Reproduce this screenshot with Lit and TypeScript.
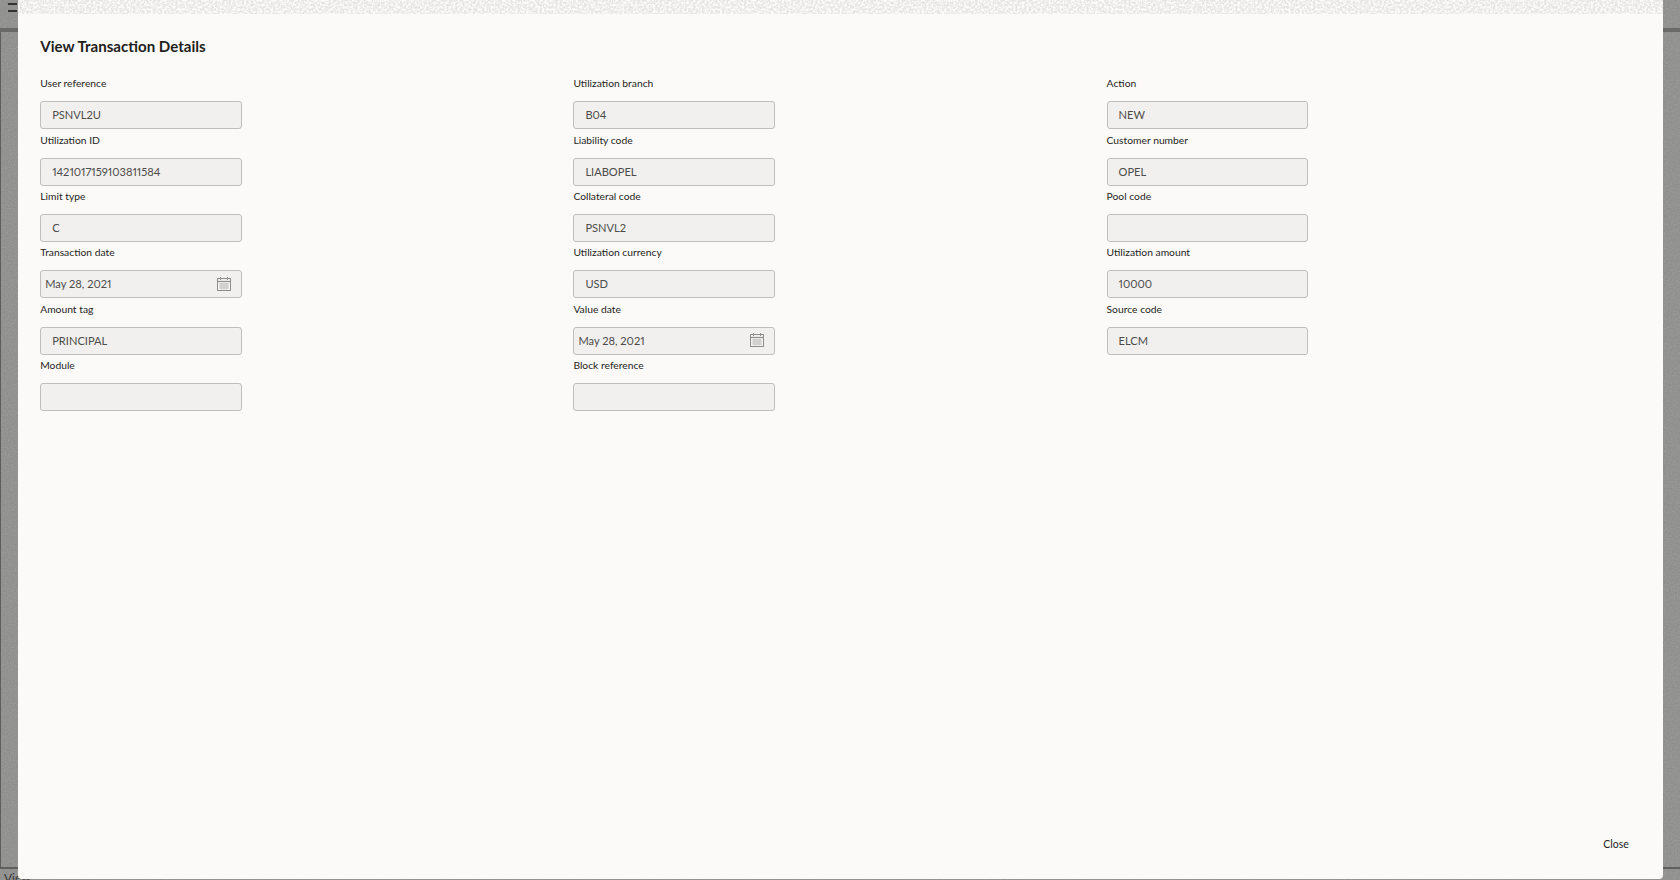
import { LitElement, html, css, svg, nothing } from "lit";
import { customElement } from "lit/decorators.js";

type Field = { label: string; value?: string; date?: boolean };

const COLUMNS: Field[][] = [
  [
    { label: "User reference", value: "PSNVL2U" },
    { label: "Utilization ID", value: "1421017159103811584" },
    { label: "Limit type", value: "C" },
    { label: "Transaction date", value: "May 28, 2021", date: true },
    { label: "Amount tag", value: "PRINCIPAL" },
    { label: "Module" },
  ],
  [
    { label: "Utilization branch", value: "B04" },
    { label: "Liability code", value: "LIABOPEL" },
    { label: "Collateral code", value: "PSNVL2" },
    { label: "Utilization currency", value: "USD" },
    { label: "Value date", value: "May 28, 2021", date: true },
    { label: "Block reference" },
  ],
  [
    { label: "Action", value: "NEW" },
    { label: "Customer number", value: "OPEL" },
    { label: "Pool code" },
    { label: "Utilization amount", value: "10000" },
    { label: "Source code", value: "ELCM" },
  ],
];

const calendar = svg`<svg class="cal" viewBox="0 0 14 14" width="14" height="14" fill="none" stroke="#8e8e8c" stroke-width="1">
  <rect x="0.5" y="1.5" width="13" height="12"/>
  <path d="M3.5 0v3M10.5 0v3"/>
  <path d="M0.5 4.5h13" stroke-width="1.2"/>
  <path d="M2.5 7h9M2.5 9h9M2.5 11h9" stroke="#b5b5b3"/>
  <path d="M4.5 6v6.5M7 6v6.5M9.5 6v6.5" stroke="#c9c9c7" stroke-width=".6"/>
</svg>`;

@customElement("app-root")
export class AppRoot extends LitElement {
  static styles = css`
    :host {
      display: block;
      width: 1680px;
      height: 880px;
      overflow: hidden;
      font-family: Lato, "Noto Sans", sans-serif;
      color: #2b2a28;
    }
    .page {
      position: relative;
      width: 1680px;
      height: 880px;
      background: #8e8e8d;
      overflow: hidden;
    }
    .noise {
      position: absolute;
      inset: 0;
      width: 100%;
      height: 100%;
    }
    .backdrop-top {
      position: absolute;
      left: 0;
      right: 0;
      top: 28px;
      height: 4px;
      background: #6a6a69;
    }
    .backdrop-edge {
      position: absolute;
      left: 0;
      top: 32px;
      bottom: 12px;
      width: 1px;
      background: #5d5d5c;
    }
    .backdrop-rule {
      position: absolute;
      left: 0;
      right: 0;
      bottom: 11px;
      height: 2px;
      background: #5f5f5e;
    }
    .backdrop-text {
      position: absolute;
      left: 4px;
      bottom: -6px;
      font-size: 12px;
      line-height: 16px;
      color: #333;
    }
    .burger {
      position: absolute;
      left: 8px;
      top: 3px;
      width: 9px;
      height: 5px;
      border-top: 2px solid #333;
      border-bottom: 2px solid #333;
    }
    .strip {
      position: absolute;
      left: 17.6px;
      right: 17.2px;
      top: 0;
      height: 13.5px;
      background: #e6e5e3;
    }
    .strip-noise {
      position: absolute;
      inset: 0;
      width: 100%;
      height: 100%;
    }
    .dialog {
      position: absolute;
      left: 17.6px;
      right: 17.2px;
      top: 13.5px;
      bottom: 1px;
      box-sizing: border-box;
      background: #fbfaf8;
      border-radius: 0 0 4px 4px;
      padding: 22.6px 23px 0 22.6px;
      display: flex;
      flex-direction: column;
    }
    h1 {
      margin: 0;
      font-size: 15.1px;
      line-height: 20px;
      font-weight: 700;
      color: #1f1e1c;
    }
    .grid {
      margin-top: 20.1px;
      display: grid;
      grid-template-columns: repeat(3, 533.2px);
    }
    .col {
      display: flex;
      flex-direction: column;
    }
    .field {
      height: 56.4px;
      display: flex;
      flex-direction: column;
      gap: 9px;
    }
    label {
      font-size: 10.3px;
      line-height: 15.8px;
      height: 16px;
      color: #1f1e1c;
    }
    .input {
      box-sizing: border-box;
      width: 201.5px;
      height: 28px;
      flex: none;
      background: #f1f0ee;
      border: 1px solid #bfbebc;
      border-radius: 3px;
      padding: 0 11px 1px;
      display: flex;
      align-items: center;
      justify-content: space-between;
      font-size: 11.1px;
      color: #4d4c4a;
      font-variant-numeric: proportional-nums;
    }
    .input.date {
      padding: 0 10px 1px 4px;
    }
    .cal {
      display: block;
    }
    .spacer {
      flex: 1;
    }
    .footer {
      display: flex;
      justify-content: flex-end;
      padding: 0 11px 27px 0;
    }
    .close {
      border: 0;
      background: none;
      padding: 0;
      font: inherit;
      font-size: 10.5px;
      line-height: 16px;
      color: #1f1e1c;
    }
  `;

  private renderField(f: Field) {
    return html`<div class="field">
      <label>${f.label}</label>
      <div class="input ${f.date ? "date" : ""}">
        <span>${f.value ?? nothing}</span>
        ${f.date ? calendar : nothing}
      </div>
    </div>`;
  }

  render() {
    return html`<div class="page">
      <svg class="noise" aria-hidden="true">
        <filter id="n"><feTurbulence type="fractalNoise" baseFrequency="0.7" numOctaves="2" seed="3"/><feColorMatrix type="matrix" values="0 0 0 0 0.35  0 0 0 0 0.35  0 0 0 0 0.35  0 0 0 1.2 -0.35"/></filter>
        <rect width="100%" height="100%" filter="url(#n)"/>
      </svg>
      <div class="backdrop-top"></div>
      <div class="backdrop-edge"></div>
      <div class="backdrop-rule"></div>
      <div class="backdrop-text">View</div>
      <div class="burger"></div>
      <div class="strip">
        <svg class="strip-noise" aria-hidden="true">
          <filter id="s"><feTurbulence type="fractalNoise" baseFrequency="0.45" numOctaves="2" seed="7"/><feColorMatrix type="matrix" values="0 0 0 0 1  0 0 0 0 1  0 0 0 0 1  0 0 0 2.4 -0.8"/></filter>
          <rect width="100%" height="100%" filter="url(#s)"/>
        </svg>
      </div>
      <div class="dialog">
        <h1>View Transaction Details</h1>
        <div class="grid">
          ${COLUMNS.map((c) => html`<div class="col">${c.map((f) => this.renderField(f))}</div>`)}
        </div>
        <div class="spacer"></div>
        <div class="footer"><button class="close">Close</button></div>
      </div>
    </div>`;
  }
}
